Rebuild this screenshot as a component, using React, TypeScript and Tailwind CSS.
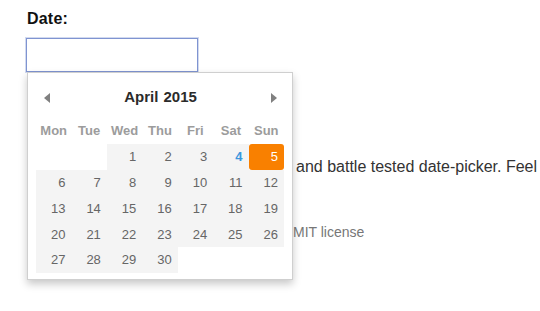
import React from "react";

const weekdays = ["Mon", "Tue", "Wed", "Thu", "Fri", "Sat", "Sun"];

function Arrow({ dir }: { dir: "left" | "right" }) {
  return (
    <svg width="6" height="10" viewBox="0 0 6 10">
      {dir === "left" ? (
        <polygon points="6,0 6,10 0,5" fill="#808080" />
      ) : (
        <polygon points="0,0 0,10 6,5" fill="#808080" />
      )}
    </svg>
  );
}

export default function App() {
  const cells: (number | null)[] = [null, null];
  for (let d = 1; d <= 30; d++) cells.push(d);
  while (cells.length < 35) cells.push(null);

  return (
    <div
      className="w-[540px] h-[311px] bg-white overflow-hidden pl-[26px] pt-[9px]"
      style={{ fontFamily: '"Liberation Sans", Arial, sans-serif' }}
    >
      <div className="text-[16px] font-bold text-[#111] leading-[20px] pl-[1px] tracking-[0.2px]">Date:</div>
      <div className="mt-[9px] w-[172px] h-[34px] border border-[#7f94d1] shadow-[0_0_0_1px_rgba(127,148,209,0.35)] bg-white" />
      <div className="relative">
        <div className="absolute left-[1px] top-0 w-[266px] h-[208px] bg-white border border-[#cfcfcf] shadow-[0_4px_8px_rgba(0,0,0,0.22)] z-10">
          <div className="flex items-center justify-between h-[48px] pl-[16px] pr-[15px] pt-[1px]">
            <Arrow dir="left" />
            <span className="text-[15px] font-bold text-[#2b2b2b] [word-spacing:1px]">April 2015</span>
            <Arrow dir="right" />
          </div>
          <div className="ml-[8px] w-[248px]">
            <div className="grid grid-cols-7 h-[20px] items-center">
              {weekdays.map((w) => (
                <div key={w} className="text-center text-[13px] font-bold text-[#9c9c9c]">
                  {w}
                </div>
              ))}
            </div>
            <div className="grid grid-cols-7 mt-[3px]">
              {cells.map((d, i) => {
                if (d === null)
                  return <div key={i} className="h-[25.8px]" />;
                if (d === 5)
                  return (
                    <div
                      key={i}
                      className="h-[25.8px] bg-[#f98000] rounded-[3px] text-white text-[13px] flex items-center justify-end pr-[6px]"
                    >
                      {d}
                    </div>
                  );
                return (
                  <div
                    key={i}
                    className={`h-[25.8px] bg-[#f4f4f4] text-[13px] flex items-center justify-end pr-[6px] ${
                      d === 4 ? "text-[#3a97dd] font-bold" : "text-[#666]"
                    }`}
                  >
                    {d}
                  </div>
                );
              })}
            </div>
          </div>
        </div>
        <div className="pt-[85px] pl-[270px] text-[16px] leading-[20px] text-[#333] whitespace-nowrap">
          and battle tested date-picker. Feel
        </div>
        <div className="pt-[45px] pl-[267px] text-[14px] leading-[20px] text-[#777] whitespace-nowrap">
          MIT license
        </div>
      </div>
    </div>
  );
}
